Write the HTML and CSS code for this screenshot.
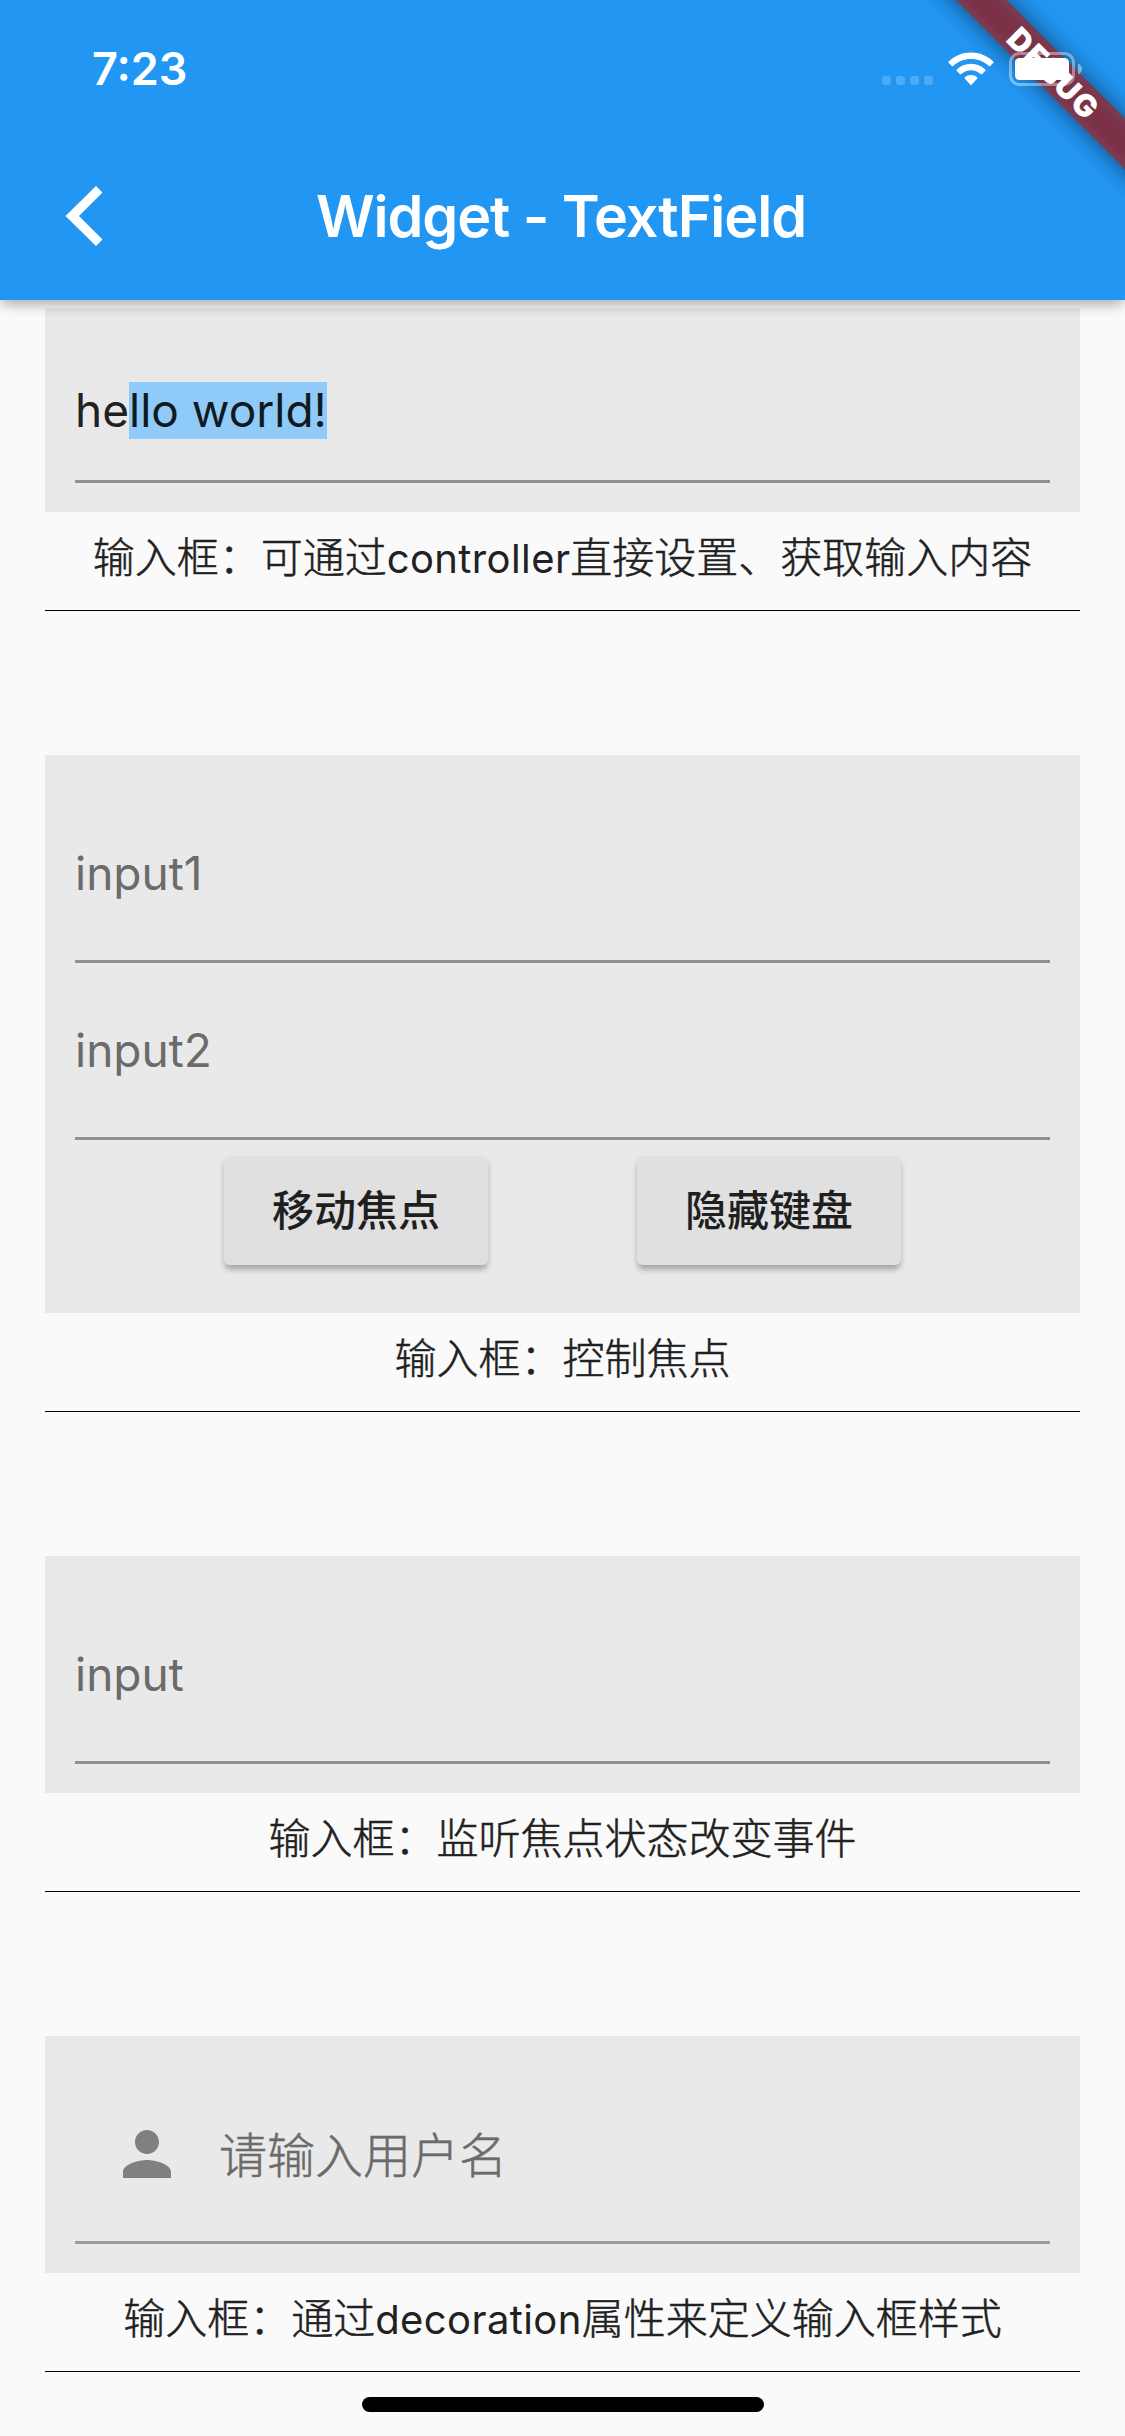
FILE: index.html
```html
<!DOCTYPE html>
<html lang="zh-CN">
<head>
<meta charset="utf-8">
<title>Widget - TextField</title>
<link rel="stylesheet" href="styles.css">
</head>
<body>
<div class="screen">
  <header class="app-bar">
    <div class="status-bar">
      <span class="clock">7:23</span>
      <div class="status-icons">
        <div class="cell-dots"><i></i><i></i><i></i><i></i></div>
        <svg class="wifi" viewBox="0 0 46 34" width="46" height="34">
          <path d="M23 0.5C31.700 0.500 39.600 3.900 45.200 9.400C45.700 9.900 45.700 10.400 45.200 10.900L42.200 13.900C41.700 14.400 41.200 14.400 40.700 13.900C36 9.500 29.800 7 23 7C16.200 7 10 9.500 5.300 13.900C4.800 14.400 4.300 14.400 3.800 13.900L0.800 10.900C0.300 10.400 0.300 9.900 0.800 9.400C6.400 3.900 14.300 0.500 23 0.500Z"/>
          <path d="M23 11.800C28.500 11.800 33.500 13.900 37.200 17.400C37.700 17.900 37.700 18.400 37.200 18.900L34.100 21.900C33.600 22.400 33.100 22.400 32.600 21.900C30 19.600 26.700 18.200 23 18.200C19.300 18.200 16 19.600 13.400 21.900C12.900 22.400 12.400 22.400 11.900 21.900L8.800 18.900C8.300 18.400 8.300 17.900 8.800 17.400C12.500 13.900 17.500 11.800 23 11.800Z"/>
          <path d="M23 23C25.400 23 27.500 23.900 29.100 25.300C29.600 25.800 29.600 26.300 29.100 26.800L23.800 32.600C23.300 33.100 22.700 33.100 22.200 32.600L16.900 26.800C16.400 26.300 16.400 25.800 16.900 25.300C18.500 23.900 20.600 23 23 23Z"/>
        </svg>
        <svg class="battery" viewBox="0 0 74 34" width="74" height="34">
          <rect x="1.500" y="1.500" width="63" height="31" rx="9" fill="none" stroke="#fff" stroke-opacity=".4" stroke-width="3"/>
          <rect x="6" y="6" width="54" height="22" rx="4.500" fill="#fff"/>
          <path d="M69 11.500C71.500 12.500 73 14.500 73 17S71.500 21.500 69 22.500Z" fill="#fff" fill-opacity=".45"/>
        </svg>
      </div>
    </div>
    <div class="toolbar">
      <svg class="back" viewBox="0 0 38 60" width="38" height="60"><path d="M31 0L37.500 6.500L14 30L37.500 53.500L31 60L0.500 30Z"/></svg>
      <h1 class="title">Widget - TextField</h1>
    </div>
    <div class="debug-corner"><div class="debug-banner"><span>DEBUG</span></div></div>
  </header>

  <main class="content">
    <section class="demo">
      <div class="panel first">
        <div class="field short"><span class="value">he<mark>llo world!</mark></span></div>
      </div>
      <p class="caption">输入框：可通过<span class="latin">controller</span>直接设置、获取输入内容</p>
    </section>

    <section class="demo">
      <div class="panel">
        <div class="field"><span class="hint">input1</span></div>
        <div class="field second"><span class="hint">input2</span></div>
        <div class="buttons">
          <button class="raised">移动焦点</button>
          <button class="raised">隐藏键盘</button>
        </div>
      </div>
      <p class="caption">输入框：控制焦点</p>
    </section>

    <section class="demo">
      <div class="panel">
        <div class="field"><span class="hint">input</span></div>
      </div>
      <p class="caption">输入框：监听焦点状态改变事件</p>
    </section>

    <section class="demo">
      <div class="panel">
        <div class="field light">
          <svg class="person" viewBox="0 0 24 24" width="72" height="72"><path d="M12 12c2.210 0 4-1.790 4-4s-1.790-4-4-4-4 1.790-4 4 1.790 4 4 4zm0 2c-2.670 0-8 1.340-8 4v2h16v-2c0-2.660-5.330-4-8-4z"/></svg>
          <span class="hint zh">请输入用户名</span>
        </div>
      </div>
      <p class="caption">输入框：通过<span class="latin">decoration</span>属性来定义输入框样式</p>
    </section>
  </main>
  <div class="home-indicator"></div>
</div>
</body>
</html>
```
FILE: styles.css
```css
* { box-sizing: border-box; }

body {
  margin: 0;
  background: #fafafa;
  font-family: Inter, "Noto Sans CJK SC", sans-serif;
  color: #212121;
}

.screen {
  position: relative;
  display: flex;
  flex-direction: column;
  width: 1125px;
  height: 2436px;
  overflow: hidden;
}

.app-bar {
  position: relative;
  z-index: 1;
  flex: none;
  height: 300px;
  background: #2196f3;
  color: #fff;
  box-shadow: 0 6px 12px -3px rgba(0, 0, 0, .2), 0 3px 15px rgba(0, 0, 0, .2);
}

.status-bar {
  position: relative;
  z-index: 2;
  display: flex;
  justify-content: space-between;
  height: 132px;
  padding: 52px 42px 0 92px;
}

.clock {
  font-size: 45px;
  font-weight: 600;
  line-height: 34px;
}

.status-icons {
  display: flex;
  align-items: flex-start;
}

.cell-dots {
  display: flex;
  gap: 5px;
  margin: 24px 15px 0 0;
}

.cell-dots i {
  width: 9px;
  height: 9px;
  border-radius: 3px;
  background: rgba(255, 255, 255, .2);
}

.wifi {
  margin-right: 15px;
  fill: #fff;
}

.toolbar {
  display: grid;
  grid-template-columns: 103px 1fr 106px;
  align-items: center;
  height: 168px;
}

.back {
  justify-self: end;
  fill: #fff;
}

.title {
  margin: 0;
  font-size: 57.500px;
  font-weight: 600;
  line-height: 72px;
  letter-spacing: -1.1px;
  text-align: center;
  white-space: nowrap;
}

.debug-corner {
  position: absolute;
  top: 0;
  right: 0;
  width: 240px;
  height: 240px;
  overflow: hidden;
}

.debug-banner {
  position: absolute;
  top: 54px;
  left: 18px;
  display: flex;
  align-items: center;
  justify-content: center;
  width: 300px;
  height: 36px;
  padding-left: 3px;
  transform: rotate(45deg);
  font-size: 31px;
  font-weight: 900;
  letter-spacing: 1.5px;
}

.debug-banner::before,
.debug-banner::after {
  content: "";
  position: absolute;
  inset: 0;
}

.debug-banner::before {
  background: rgba(0, 0, 0, .5);
  filter: blur(12px);
}

.debug-banner::after {
  background: rgba(183, 28, 28, .627);
}

.debug-banner span {
  position: relative;
  z-index: 1;
}

.content {
  padding: 8px 45px 0;
}

.demo {
  margin-bottom: 144px;
}

.panel {
  padding: 0 30px 29px;
  background: #e9e9e9;
}

.field {
  display: flex;
  align-items: center;
  height: 208px;
  padding-top: 32px;
  border-bottom: 3px solid #909090;
  font-size: 46px;
  line-height: 57px;
}

.field.short { height: 175px; }

.field.second {
  height: 177px;
  padding-top: 0;
}

.field.light {
  padding-top: 31px;
  border-color: #9c9c9c;
}

.value, .hint { white-space: pre; }

.value mark {
  display: inline-block;
  height: 57px;
  background: #90caf9;
  color: #0f1a20;
}

.hint { color: #6b6b6b; }

.hint.zh {
  padding-top: 3px;
  font-size: 48px;
  font-weight: 300;
  -webkit-text-stroke: .5px #6b6b6b;
}

.person {
  margin: 0 36px;
  fill: #808080;
}

.buttons {
  display: flex;
  justify-content: space-evenly;
  padding: 16px 0 19px;
}

.raised {
  width: 264px;
  height: 109px;
  padding: 0;
  border: 0;
  border-radius: 6px;
  background: #e0e0e0;
  box-shadow: 0 6px 6px -2px rgba(0, 0, 0, .2), 0 4px 6px rgba(0, 0, 0, .14);
  color: #1f1f1f;
  font: 500 42px/60px Inter, "Noto Sans CJK SC", sans-serif;
}

.caption {
  height: 99px;
  margin: 0;
  padding-top: 16px;
  border-bottom: 1px solid #000;
  font-size: 42px;
  font-weight: 300;
  line-height: 60px;
  text-align: center;
  white-space: nowrap;
  -webkit-text-stroke: .5px #212121;
}

.latin {
  font-size: 40px;
  font-weight: 400;
  letter-spacing: .4px;
  -webkit-text-stroke-color: transparent;
}

.home-indicator {
  position: absolute;
  bottom: 24px;
  left: 362px;
  width: 402px;
  height: 15px;
  border-radius: 8px;
  background: #000;
}
```
